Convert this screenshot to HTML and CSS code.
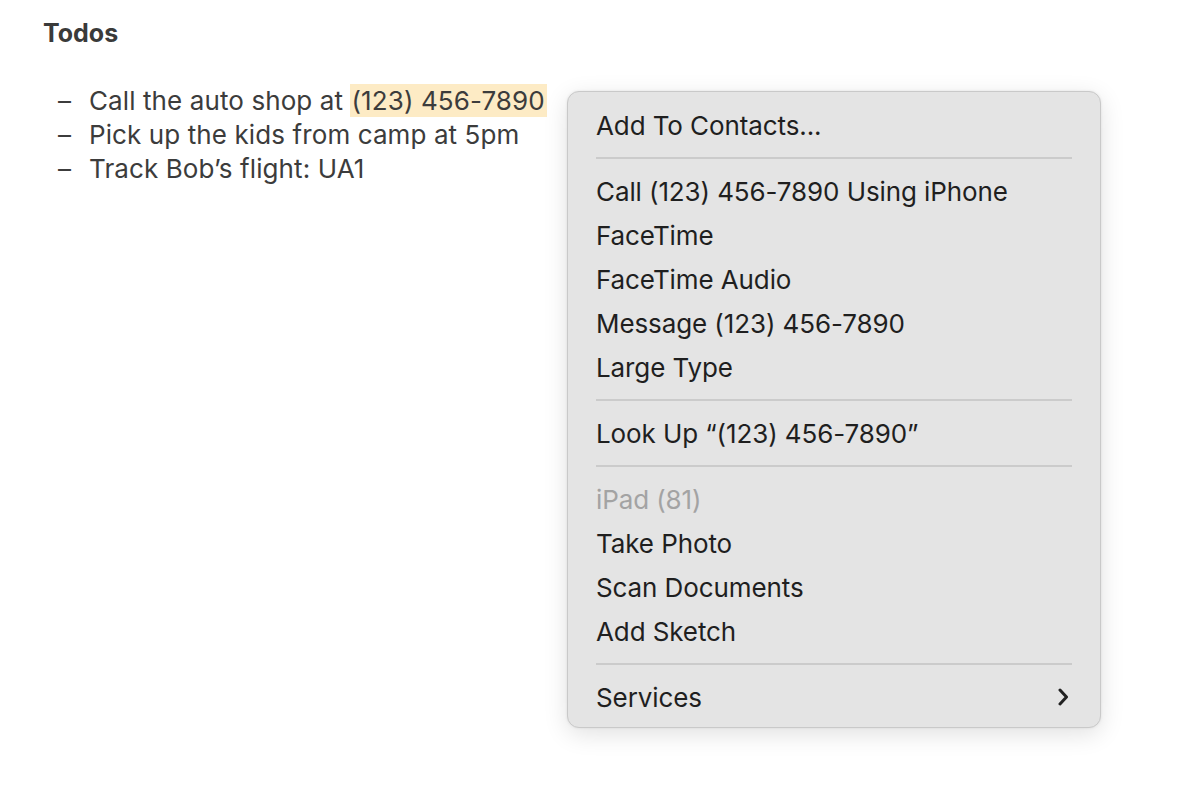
FILE: index.html
```html
<!DOCTYPE html>
<html>
<head>
<meta charset="utf-8">
<link rel="stylesheet" href="styles.css">
</head>
<body>
<div class="note">
  <h1 class="title">Todos</h1>
  <ul class="todos">
    <li><span class="dash">–</span><span>Call the auto shop at <span class="hl">(123) 456-7890</span></span></li>
    <li><span class="dash">–</span><span>Pick up the kids from camp at 5pm</span></li>
    <li><span class="dash">–</span><span>Track Bob’s flight: UA1</span></li>
  </ul>
</div>
<div class="menu">
  <div class="item">Add To Contacts...</div>
  <div class="sep"></div>
  <div class="item">Call (123) 456-7890 Using iPhone</div>
  <div class="item">FaceTime</div>
  <div class="item">FaceTime Audio</div>
  <div class="item">Message (123) 456-7890</div>
  <div class="item">Large Type</div>
  <div class="sep"></div>
  <div class="item">Look Up “(123) 456-7890”</div>
  <div class="sep"></div>
  <div class="item disabled">iPad (81)</div>
  <div class="item">Take Photo</div>
  <div class="item">Scan Documents</div>
  <div class="item">Add Sketch</div>
  <div class="sep"></div>
  <div class="item sub"><span>Services</span>
    <svg class="chev" width="14" height="18" viewBox="0 0 14 18"><path d="M4 2 L10.5 9 L4 16" fill="none" stroke="#222" stroke-width="3" stroke-linecap="round" stroke-linejoin="round"/></svg>
  </div>
</div>
</body>
</html>
```
FILE: styles.css
```css
html, body {
  margin: 0;
  padding: 0;
  background: #ffffff;
}
body {
  font-family: Inter, "Noto Sans", "Liberation Sans", sans-serif;
  width: 1186px;
  height: 790px;
  position: relative;
  overflow: hidden;
}
.note {
  padding: 18px 0 0 43px;
  color: #3c3c3c;
}
.title {
  margin: 0;
  font-size: 25px;
  font-weight: 700;
  line-height: 30px;
  color: #3a3a3a;
}
.todos {
  list-style: none;
  margin: 36px 0 0 0;
  padding: 0 0 0 15px;
  font-size: 26px;
  line-height: 34px;
  letter-spacing: 0.1px;
}
.todos li {
  display: flex;
}
.dash {
  width: 31px;
  flex: none;
}
.hl {
  background: #fdebc5;
  padding: 1px 2px 1px 2px;
  margin-left: -1px;
}
.menu {
  position: absolute;
  left: 567px;
  top: 91px;
  width: 534px;
  box-sizing: border-box;
  padding: 11px 0 8px 0;
  background: #e4e4e4;
  border: 1px solid #c9c9c9;
  border-radius: 12px;
  box-shadow: 0 6px 24px rgba(0,0,0,0.12), 0 0 3px rgba(0,0,0,0.08);
  font-size: 26px;
  letter-spacing: -0.1px;
  color: #1f1f1f;
}
.item {
  height: 44px;
  display: flex;
  align-items: center;
  padding: 0 30px 0 28px;
}
.item.disabled {
  color: #a3a3a3;
}
.item.sub {
  justify-content: space-between;
}
.chev {
  display: block;
}
.sep {
  height: 2px;
  margin: 10px 28px 10px 28px;
  background: #cbcbcb;
}
```
